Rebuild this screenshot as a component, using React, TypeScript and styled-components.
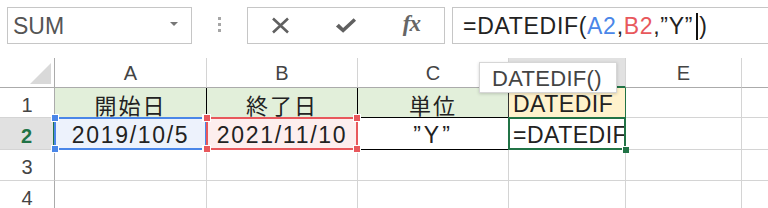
import React from 'react';
import styled, { createGlobalStyle, css } from 'styled-components';

const GlobalStyle = createGlobalStyle`
  html, body {
    margin: 0;
    padding: 0;
    background: #ffffff;
    overflow: hidden;
  }
  body {
    font-family: 'Liberation Sans', 'Noto Sans CJK JP', sans-serif;
  }
`;

const GREEN = '#217346';
const BLUE = '#4a86e8';
const RED = '#e8585c';

const Page = styled.div`
  width: 768px;
  height: 208px;
  overflow: hidden;
  color: #222;
`;

/* ---------- formula bar ---------- */

const TopBar = styled.div`
  display: flex;
  align-items: stretch;
  height: 37px;
  padding: 7px 0 0 7px;
  margin-bottom: 14px;
`;

const NameBox = styled.div`
  width: 185px;
  flex: none;
  box-sizing: border-box;
  border: 1px solid #c6c6c6;
  display: flex;
  align-items: center;
  justify-content: space-between;
  padding: 2px 13px 0 5px;
  font-size: 23px;
  color: #555;
`;

const Caret = styled.span`
  width: 0;
  height: 0;
  border-left: 4px solid transparent;
  border-right: 4px solid transparent;
  border-top: 4px solid #777;
  margin-top: -6px;
`;

const Grip = styled.div`
  width: 55px;
  flex: none;
  display: flex;
  flex-direction: column;
  align-items: center;
  justify-content: center;
  gap: 3px;
  padding-bottom: 2px;
`;

const GripDot = styled.span`
  width: 3px;
  height: 3px;
  background: #a6a6a6;
`;

const ButtonBox = styled.div`
  width: 198px;
  flex: none;
  box-sizing: border-box;
  border: 1px solid #c6c6c6;
  display: flex;
  align-items: center;
  justify-content: space-around;
  margin-right: 7px;
`;

const IconSlot = styled.span`
  width: 22px;
  display: flex;
  justify-content: center;
  align-items: center;
`;

const FxLabel = styled.span`
  font-family: 'Liberation Serif', serif;
  font-style: italic;
  font-weight: bold;
  font-size: 23px;
  color: #666;
  letter-spacing: -1px;
  margin-top: -3px;
`;

const FormulaBox = styled.div`
  flex: 1;
  box-sizing: border-box;
  border: 1px solid #c6c6c6;
  border-right: none;
  display: flex;
  align-items: center;
  padding: 2px 0 0 10px;
  font-size: 23px;
  letter-spacing: 0.7px;
  color: #222;
  white-space: nowrap;
`;

const RefText = styled.span<{ $color: string }>`
  color: ${p => p.$color};
`;

const TextCursor = styled.span`
  display: inline-block;
  width: 2px;
  height: 27px;
  background: #111;
  margin: 0 1px 0 3px;
  vertical-align: middle;
`;

/* ---------- sheet ---------- */

const Sheet = styled.div`
  position: relative;
`;

const Row = styled.div<{ $h: number }>`
  display: flex;
  height: ${p => p.$h}px;
`;

const Corner = styled.div`
  width: 55px;
  flex: none;
  box-sizing: border-box;
  border-right: 1px solid #ababab;
  border-bottom: 1px solid #ababab;
  display: flex;
  align-items: flex-end;
  justify-content: flex-end;
  padding: 0 3px 3px 0;
`;

const ColHead = styled.div<{ $w: number; $active?: boolean }>`
  width: ${p => p.$w}px;
  flex: none;
  box-sizing: border-box;
  border-right: 1px solid #d4d4d4;
  border-bottom: 1px solid #ababab;
  display: flex;
  align-items: center;
  justify-content: center;
  padding-top: 1px;
  font-size: 20px;
  color: #444;
  ${p =>
    p.$active &&
    css`
      background: #e1e1e1;
      border-bottom: 2px solid ${GREEN};
      color: ${GREEN};
    `}
`;

const RowHead = styled.div<{ $active?: boolean }>`
  width: 55px;
  flex: none;
  box-sizing: border-box;
  border-right: 1px solid #ababab;
  border-bottom: 1px solid #d4d4d4;
  display: flex;
  align-items: center;
  justify-content: center;
  padding-top: 5px;
  font-size: 20px;
  color: #444;
  ${p =>
    p.$active &&
    css`
      background: #e1e1e1;
      border-right: 2px solid ${GREEN};
      color: ${GREEN};
      font-weight: bold;
    `}
`;

const Cell = styled.div<{
  $w: number;
  $bg?: string;
  $align?: 'center' | 'flex-start';
  $right?: string;
  $bottom?: string;
}>`
  position: relative;
  width: ${p => p.$w}px;
  flex: none;
  box-sizing: border-box;
  background: ${p => p.$bg ?? '#ffffff'};
  border-right: 1px solid ${p => p.$right ?? '#d4d4d4'};
  border-bottom: 1px solid ${p => p.$bottom ?? '#d4d4d4'};
  display: flex;
  align-items: center;
  justify-content: ${p => p.$align ?? 'center'};
  padding: 4px 0 0 ${p => (p.$align === 'flex-start' ? '4px' : '0')};
  min-width: 0;
`;

const CellText = styled.span<{ $spacing?: number }>`
  font-size: 23px;
  color: #222;
  white-space: nowrap;
  overflow: hidden;
  letter-spacing: ${p => p.$spacing ?? 0}px;
`;

const JpText = styled.span`
  font-family: 'Noto Sans CJK JP', sans-serif;
  font-size: 22px;
  color: #222;
  letter-spacing: 2px;
  margin-top: -2px;
`;

const RefBox = styled.div<{ $color: string }>`
  position: absolute;
  top: -1px;
  left: -1px;
  right: -1px;
  bottom: -1px;
  border: 2px solid ${p => p.$color};
  pointer-events: none;
  z-index: 2;
`;

const Knob = styled.span<{ $color: string; $x: 'left' | 'right'; $y: 'top' | 'bottom' }>`
  position: absolute;
  width: 8px;
  height: 8px;
  box-sizing: border-box;
  background: ${p => p.$color};
  border: 1px solid #ffffff;
  ${p => p.$x}: -5px;
  ${p => p.$y}: -5px;
`;

const ActiveBox = styled.div`
  position: absolute;
  top: -1px;
  left: -1px;
  right: -1px;
  bottom: -1px;
  border: 2px solid ${GREEN};
  pointer-events: none;
  z-index: 3;
`;

const FillHandle = styled.span`
  position: absolute;
  right: -5px;
  bottom: -5px;
  width: 7px;
  height: 7px;
  box-sizing: border-box;
  background: ${GREEN};
  border-top: 1px solid #ffffff;
  border-left: 1px solid #ffffff;
`;

const Tooltip = styled.div`
  position: absolute;
  left: 479px;
  top: 4px;
  width: 138px;
  height: 31px;
  box-sizing: border-box;
  background: #ffffff;
  border: 1px solid #d6d6d6;
  box-shadow: 0 1px 3px rgba(0, 0, 0, 0.18);
  display: flex;
  align-items: center;
  padding: 2px 0 0 12px;
  font-size: 22px;
  letter-spacing: 0.3px;
  color: #444;
  z-index: 5;
`;

const COLS = [152, 151, 151, 117, 116, 120];
// D's letter sits under the tooltip, F's centre lies beyond the window
const LETTERS = ['A', 'B', 'C', '', 'E', ''];

const RefKnobs: React.FC<{ color: string }> = ({ color }) => (
  <>
    <Knob $color={color} $x="left" $y="top" />
    <Knob $color={color} $x="right" $y="top" />
    <Knob $color={color} $x="left" $y="bottom" />
    <Knob $color={color} $x="right" $y="bottom" />
  </>
);

const EmptyRow: React.FC<{ n: number }> = ({ n }) => (
  <Row $h={31}>
    <RowHead>{n}</RowHead>
    {COLS.map((w, i) => (
      <Cell key={i} $w={w} />
    ))}
  </Row>
);

const App: React.FC = () => {
  return (
    <Page>
      <GlobalStyle />
      <TopBar>
        <NameBox>
          <span>SUM</span>
          <Caret />
        </NameBox>
        <Grip>
          <GripDot />
          <GripDot />
          <GripDot />
        </Grip>
        <ButtonBox>
          <IconSlot>
            <svg width="19" height="17" viewBox="0 0 19 17">
              <path d="M2 1.5 L17 15.5 M17 1.5 L2 15.5" stroke="#606060" strokeWidth="2.6" fill="none" />
            </svg>
          </IconSlot>
          <IconSlot>
            <svg width="23" height="17" viewBox="0 0 23 17">
              <path d="M1 9.5 L4 6.8 L8.5 11 L19.5 1 L22 3.6 L8.5 16.2 Z" fill="#606060" />
            </svg>
          </IconSlot>
          <IconSlot>
            <FxLabel>fx</FxLabel>
          </IconSlot>
        </ButtonBox>
        <FormulaBox>
          =DATEDIF(<RefText $color={BLUE}>A2</RefText>,<RefText $color={RED}>B2</RefText>,”Y”
          <TextCursor />)
        </FormulaBox>
      </TopBar>

      <Sheet>
        <Row $h={30}>
          <Corner>
            <svg width="21" height="21" viewBox="0 0 21 21">
              <path d="M21 0 L21 21 L0 21 Z" fill="#d9d9d9" />
            </svg>
          </Corner>
          {COLS.map((w, i) => (
            <ColHead key={i} $w={w} $active={i === 3}>
              {LETTERS[i]}
            </ColHead>
          ))}
        </Row>

        <Row $h={30}>
          <RowHead>1</RowHead>
          <Cell $w={COLS[0]} $bg="#e2efda" $right="#000">
            <JpText>開始日</JpText>
          </Cell>
          <Cell $w={COLS[1]} $bg="#e2efda" $right="#000">
            <JpText>終了日</JpText>
          </Cell>
          <Cell $w={COLS[2]} $bg="#e2efda" $right="#333" $bottom="#000">
            <JpText>単位</JpText>
          </Cell>
          <Cell $w={COLS[3]} $bg="#fff2cc" $align="flex-start" $right={GREEN}>
            <CellText $spacing={0.5}>DATEDIF</CellText>
          </Cell>
          <Cell $w={COLS[4]} />
          <Cell $w={COLS[5]} />
        </Row>

        <Row $h={32}>
          <RowHead $active>2</RowHead>
          <Cell $w={COLS[0]} $bg="#edf2fc">
            <CellText $spacing={1.7}>2019/10/5</CellText>
            <RefBox $color={BLUE}>
              <RefKnobs color={BLUE} />
            </RefBox>
          </Cell>
          <Cell $w={COLS[1]} $bg="#fdeeee">
            <CellText $spacing={1.7}>2021/11/10</CellText>
            <RefBox $color={RED}>
              <RefKnobs color={RED} />
            </RefBox>
          </Cell>
          <Cell $w={COLS[2]} $bottom="#000">
            <CellText $spacing={3}>”Y”</CellText>
          </Cell>
          <Cell $w={COLS[3]} $align="flex-start">
            <CellText $spacing={0.5}>=DATEDIF</CellText>
            <ActiveBox>
              <FillHandle />
            </ActiveBox>
          </Cell>
          <Cell $w={COLS[4]} />
          <Cell $w={COLS[5]} />
        </Row>

        <EmptyRow n={3} />
        <EmptyRow n={4} />

        <Tooltip>DATEDIF()</Tooltip>
      </Sheet>
    </Page>
  );
};

export default App;
